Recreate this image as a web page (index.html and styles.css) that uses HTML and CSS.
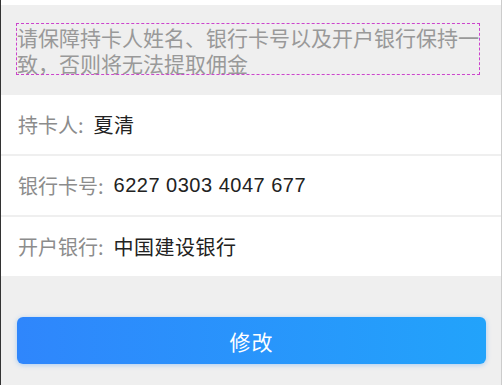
FILE: index.html
```html
<!DOCTYPE html>
<html lang="zh-CN">
<head>
<meta charset="utf-8">
<title>银行卡信息</title>
<link rel="stylesheet" href="styles.css">
</head>
<body>
<div class="page">
  <div class="topbar"></div>
  <div class="hint-section">
    <p class="hint">请保障持卡人姓名、银行卡号以及开户银行保持一致，否则将无法提取佣金</p>
  </div>
  <div class="rows">
    <div class="row"><span class="label">持卡人:</span><span class="value">夏清</span></div>
    <div class="row"><span class="label">银行卡号:</span><span class="value">6227 0303 4047 677</span></div>
    <div class="row"><span class="label">开户银行:</span><span class="value">中国建设银行</span></div>
  </div>
  <div class="actions">
    <button class="btn">修改</button>
  </div>
</div>
</body>
</html>
```
FILE: styles.css
```css
html, body {
  margin: 0;
  padding: 0;
  background: #ffffff;
}
body {
  font-family: "Noto Sans CJK SC", "Noto Sans", sans-serif;
}
.page {
  width: 500px;
  height: 385px;
  background: #efefef;
  border-left: 1px solid #333333;
  border-right: 1px solid #cccccc;
  box-sizing: content-box;
}
.topbar {
  height: 5px;
  background: #ffffff;
}
.hint-section {
  padding: 19px 22px 21px 16px;
}
.hint {
  margin: 0;
  height: 50px;
  font-size: 21px;
  line-height: 26px;
  color: #999999;
  outline: 1px dashed #cc44cc;
  outline-offset: 0;
  word-break: break-all;
}
.rows {
  display: flex;
  flex-direction: column;
  gap: 2px;
}
.row {
  height: 59px;
  background: #ffffff;
  display: flex;
  align-items: center;
  padding-left: 17px;
  font-size: 20px;
}
.label {
  color: #8c8c8c;
  margin-right: 10px;
}
.value {
  color: #222222;
  font-family: "Liberation Sans", "Noto Sans CJK SC", sans-serif;
  letter-spacing: 0.5px;
}
.actions {
  padding: 41px 15px 0 16px;
}
.btn {
  display: block;
  width: 100%;
  height: 47px;
  border: none;
  border-radius: 6px;
  background: linear-gradient(90deg, #2f86fc 0%, #22a3fb 100%);
  box-shadow: 0 1px 5px rgba(40, 140, 250, 0.35);
  color: #ffffff;
  font-family: "Noto Sans CJK SC", "Noto Sans", sans-serif;
  font-size: 21px;
  letter-spacing: 1px;
  padding: 0;
}
```
